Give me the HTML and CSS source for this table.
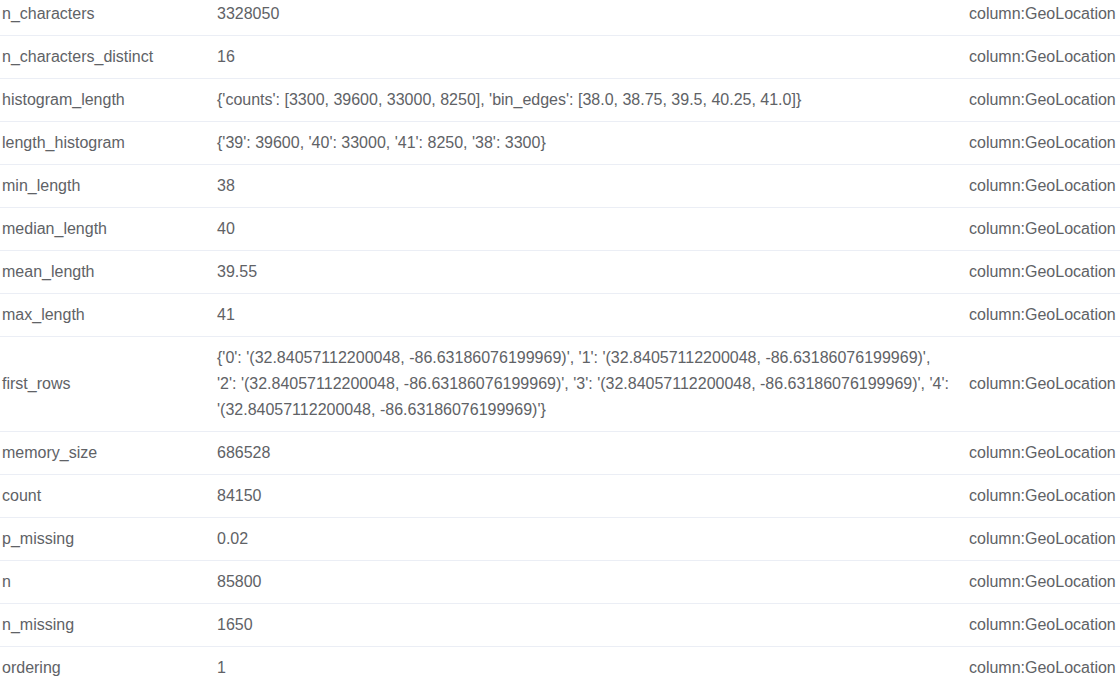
FILE: index.html
```html
<!DOCTYPE html>
<html lang="en">
<head>
  <meta charset="UTF-8">
  <title>Column statistics</title>
  <link rel="stylesheet" href="styles.css">
</head>
<body>
  <table class="stats">
    <colgroup>
      <col class="col-name">
      <col class="col-value">
      <col class="col-source">
    </colgroup>
    <tbody>
      <tr><td>n_characters</td><td>3328050</td><td>column:GeoLocation</td></tr>
      <tr><td>n_characters_distinct</td><td>16</td><td>column:GeoLocation</td></tr>
      <tr><td>histogram_length</td><td>{'counts': [3300, 39600, 33000, 8250], 'bin_edges': [38.0, 38.75, 39.5, 40.25, 41.0]}</td><td>column:GeoLocation</td></tr>
      <tr><td>length_histogram</td><td>{'39': 39600, '40': 33000, '41': 8250, '38': 3300}</td><td>column:GeoLocation</td></tr>
      <tr><td>min_length</td><td>38</td><td>column:GeoLocation</td></tr>
      <tr><td>median_length</td><td>40</td><td>column:GeoLocation</td></tr>
      <tr><td>mean_length</td><td>39.55</td><td>column:GeoLocation</td></tr>
      <tr><td>max_length</td><td>41</td><td>column:GeoLocation</td></tr>
      <tr><td>first_rows</td><td>{'0': '(32.84057112200048, -86.63186076199969)', '1': '(32.84057112200048, -86.63186076199969)', '2': '(32.84057112200048, -86.63186076199969)', '3': '(32.84057112200048, -86.63186076199969)', '4': '(32.84057112200048, -86.63186076199969)'}</td><td>column:GeoLocation</td></tr>
      <tr><td>memory_size</td><td>686528</td><td>column:GeoLocation</td></tr>
      <tr><td>count</td><td>84150</td><td>column:GeoLocation</td></tr>
      <tr><td>p_missing</td><td>0.02</td><td>column:GeoLocation</td></tr>
      <tr><td>n</td><td>85800</td><td>column:GeoLocation</td></tr>
      <tr><td>n_missing</td><td>1650</td><td>column:GeoLocation</td></tr>
      <tr><td>ordering</td><td>1</td><td>column:GeoLocation</td></tr>
    </tbody>
  </table>
</body>
</html>
```

FILE: styles.css
```css
body {
  margin: 0;
  padding: 0;
  background-color: #fff;
  font-family: "Liberation Sans", Arial, sans-serif;
  font-size: 16px;
  color: #606266;
}
.stats {
  width: 1120px;
  margin-top: -7px;
  border-collapse: collapse;
  table-layout: fixed;
}
.col-name {
  width: 215px;
}
.col-value {
  width: 752px;
}
.col-source {
  width: 153px;
}
.stats td {
  padding: 8px 2px;
  line-height: 26px;
  border-bottom: 1px solid #ebeef5;
  vertical-align: middle;
}
.stats td:nth-child(2) {
  padding-right: 15px;
}
```
